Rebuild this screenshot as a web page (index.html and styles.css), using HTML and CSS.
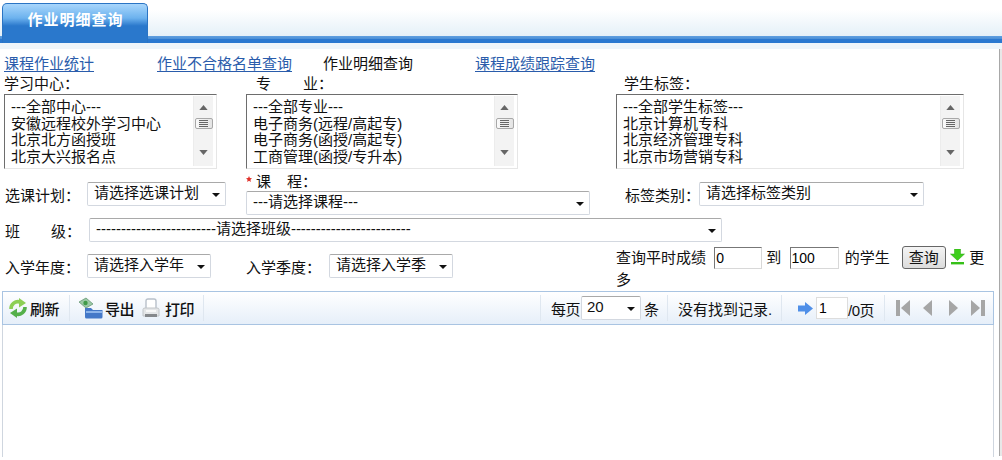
FILE: index.html
```html
<!DOCTYPE html>
<html lang="zh-CN">
<head>
<meta charset="utf-8">
<title>作业明细查询</title>
<link rel="stylesheet" href="styles.css">
</head>
<body>
<div class="page">
  <header class="tabbar">
    <div class="tab">作业明细查询</div>
  </header>
  <div class="band"></div>
  <main class="main">
  <nav class="links">
    <a class="link link-a" href="#">课程作业统计</a>
    <a class="link link-b" href="#">作业不合格名单查询</a>
    <span class="link-cur">作业明细查询</span>
    <a class="link link-c" href="#">课程成绩跟踪查询</a>
  </nav>
  <form class="form">
    <div class="cell">
      <div class="lbl">学习中心：</div>
      <div class="list list-1">
        <div class="items"><div>---全部中心---</div><div>安徽远程校外学习中心</div><div>北京北方函授班</div><div>北京大兴报名点</div></div>
        <div class="sb"><svg class="sb-up" width="9" height="5" viewBox="0 0 10 6"><path d="M5 0L10 6H0z" fill="#666"/></svg><div class="thumb"><i></i></div><svg class="sb-dn" width="9" height="5" viewBox="0 0 10 6"><path d="M0 0H10L5 6z" fill="#666"/></svg></div>
      </div>
    </div>
    <div class="cell">
      <div class="lbl lbl-ind">专<span class="sp"></span>业：</div>
      <div class="list list-2">
        <div class="items"><div>---全部专业---</div><div>电子商务(远程/高起专)</div><div>电子商务(函授/高起专)</div><div>工商管理(函授/专升本)</div></div>
        <div class="sb"><svg class="sb-up" width="9" height="5" viewBox="0 0 10 6"><path d="M5 0L10 6H0z" fill="#666"/></svg><div class="thumb"><i></i></div><svg class="sb-dn" width="9" height="5" viewBox="0 0 10 6"><path d="M0 0H10L5 6z" fill="#666"/></svg></div>
      </div>
    </div>
    <div class="cell">
      <div class="lbl lbl-ind3">学生标签：</div>
      <div class="list list-3">
        <div class="items"><div>---全部学生标签---</div><div>北京计算机专科</div><div>北京经济管理专科</div><div>北京市场营销专科</div></div>
        <div class="sb"><svg class="sb-up" width="9" height="5" viewBox="0 0 10 6"><path d="M5 0L10 6H0z" fill="#666"/></svg><div class="thumb"><i></i></div><svg class="sb-dn" width="9" height="5" viewBox="0 0 10 6"><path d="M0 0H10L5 6z" fill="#666"/></svg></div>
      </div>
    </div>

    <div class="cell row-inline">
      <span class="lbl-w">选课计划：</span>
      <label class="sel sel-plan"><select><option>请选择选课计划</option></select></label>
    </div>
    <div class="cell">
      <div class="lbl lbl-course"><svg class="star" width="6" height="6" viewBox="0 0 10 10"><path d="M5 0L6.500 3.400 10 3.800 7.400 6.200 8.100 10 5 8 1.900 10 2.600 6.200 0 3.800 3.500 3.400z" fill="#e0312a"/></svg>课<span class="sp2"></span>程：</div>
      <label class="sel sel-course"><select><option>---请选择课程---</option></select></label>
    </div>
    <div class="cell row-inline row-tag">
      <span class="lbl-w2">标签类别：</span>
      <label class="sel sel-tag"><select><option>请选择标签类别</option></select></label>
    </div>

    <div class="cell-full row-inline">
      <span class="lbl-class">班<span class="sp3"></span>级：</span>
      <label class="sel sel-class"><select><option>------------------------请选择班级------------------------</option></select></label>
    </div>

    <div class="cell row-inline row-year">
      <span class="lbl-w">入学年度：</span>
      <label class="sel sel-year"><select><option>请选择入学年</option></select></label>
    </div>
    <div class="cell row-inline row-year">
      <span class="lbl-w lbl-season">入学季度：</span>
      <label class="sel sel-year"><select><option>请选择入学季</option></select></label>
    </div>
    <div class="cell score">
      查询平时成绩 <input class="num num-a" value="0"> 到 <input class="num num-b" value="100"> 的学生 <button class="btn" type="button">查询</button>
      <svg class="more-ic" width="15" height="16" viewBox="0 0 15 16"><path d="M4.500 0H10.500V5H14.500L7.500 11.500.5 5H4.500z" fill="#3ecf1c" stroke="#2aa012" stroke-width=".5"/><rect x="1" y="13" width="13" height="2.400" fill="#36c018"/></svg>
      更多
    </div>
  </form>

  <section class="grid">
    <div class="toolbar">
      <div class="tgroup tg-1">
        <svg class="ic" width="20" height="20" viewBox="0 0 20 20"><g fill="none"><path d="M3 11A7 7 0 0 1 12 4" stroke="#8ccf55" stroke-width="3.600"/><path d="M11 0L18 5 11 9.500z" fill="#8ccf55"/><g transform="rotate(180 10 10)"><path d="M3 11A7 7 0 0 1 12 4" stroke="#55b04a" stroke-width="3.600"/><path d="M11 0L18 5 11 9.500z" fill="#55b04a"/></g></g></svg>
        <span>刷新</span>
      </div>
      <div class="tgroup tg-2">
        <svg class="ic" width="26" height="22" viewBox="0 0 26 22"><path d="M1 5L8 1l7 6-7 4z" fill="#9cc9a6" stroke="#5c8f6a" stroke-width=".7"/><circle cx="7.500" cy="6" r="2.200" fill="#3f9a48"/><path d="M7 11h6l2 2h9.500v7a1.500 1.500 0 0 1-1.500 1.500H8.500A1.500 1.500 0 0 1 7 20z" fill="#4478c8"/><path d="M8 14h16v2H8z" fill="#8db4ea"/></svg>
        <span>导出</span>
        <svg class="ic ic-print" width="18" height="21" viewBox="0 0 18 21"><path d="M4 10V3Q4 1 6 1h6q2 0 2 2v7" fill="#fff" stroke="#b8c0ca" stroke-width="1.400"/><path d="M1 11.500Q1 10 3 10h12q2 0 2 1.500V18H1z" fill="#e4e6e8" stroke="#c0c4c8"/><rect x="3" y="16" width="12" height="3" fill="#85888c"/><rect x="4" y="12" width="10" height="2" fill="#f8f8f8"/></svg>
        <span>打印</span>
      </div>
      <div class="tgroup tg-3">
        <span>每页</span>
        <label class="sel sel-page"><select><option>20</option></select></label>
        <span>条</span>
      </div>
      <div class="tgroup tg-4"><span>没有找到记录.</span></div>
      <div class="tgroup tg-5">
        <svg width="15" height="13" viewBox="0 0 15 13"><path d="M0 3.500H7V0L15 6.500 7 13V9.500H0z" fill="#4f8fe8"/></svg>
        <input class="pageno" value="1">
        <span class="pg">/0页</span>
      </div>
      <div class="tgroup tg-6">
        <svg width="14" height="16" viewBox="0 0 14 16"><rect x="0" y="0" width="4" height="16" fill="#a6a6a6"/><path d="M14 0V16L5 8z" fill="#a6a6a6"/></svg>
        <svg width="9" height="16" viewBox="0 0 9 16"><path d="M9 0V16L0 8z" fill="#a6a6a6"/></svg>
        <svg class="pg-next" width="9" height="16" viewBox="0 0 9 16"><path d="M0 0V16L9 8z" fill="#a6a6a6"/></svg>
        <svg width="14" height="16" viewBox="0 0 14 16"><path d="M0 0V16L9 8z" fill="#a6a6a6"/><rect x="10" y="0" width="4" height="16" fill="#a6a6a6"/></svg>
      </div>
    </div>
    <div class="grid-body"></div>
  </section>
  </main>
</div>
</body>
</html>
```
FILE: styles.css
```css
* { box-sizing: border-box; }
html, body { margin: 0; padding: 0; background: #fff; }
body {
  font-family: "Liberation Sans", "Noto Sans CJK SC", sans-serif;
  font-size: 15px;
  color: #111;
  overflow: hidden;
}
.page { width: 1002px; height: 460px; overflow: hidden; }
.tabbar {
  height: 43px;
  padding: 3px 0 0 2px;
  background: linear-gradient(#fff 0, #fff 10px, #e4f0f8 36px, #5f9fe0 36px, #4a8fd6 39px, #2a78d0 39px);
}
.tab {
  width: 146px;
  height: 40px;
  border: 1px solid #2a74c4;
  border-bottom: 0;
  border-radius: 5px 5px 0 0;
  background: linear-gradient(#a8d6fc 0, #6cb2ee 36%, #2a78cc 56%, #2a78cc 100%);
  color: #fff;
  font-weight: 700;
  text-align: center;
  line-height: 32px;
  letter-spacing: 1px;
  padding-left: 1px;
}
.band { height: 6px; background: #eef5fa; }
.main {
  height: 407px;
  border-right: 2px solid #e8e8e8;
  box-shadow: inset -1px 0 0 #a8a8a8;
}
.links { display: flex; height: 27px; padding-left: 4px; align-items: center; }
.link { color: #2a5cab; text-decoration: underline; text-underline-offset: 2px; }
.link-a { width: 153px; }
.link-b { width: 166px; }
.link-cur { width: 152px; }
.form {
  display: grid;
  grid-template-columns: 242px 370px 372px;
  grid-template-rows: 103px 36px 36px 43px;
  padding-left: 4px;
  margin-top: -3px;
}
.cell, .cell-full { min-width: 0; white-space: nowrap; }
.cell-full { grid-column: 1 / -1; }
.row-inline { display: flex; align-items: center; }
.row-year { height: 36px; }
.lbl { height: 21px; line-height: 21px; }
.lbl-ind { padding-left: 10px; }
.lbl-ind3 { padding-left: 8px; }
.sp { display: inline-block; width: 32px; }
.sp2 { display: inline-block; width: 16px; }
.sp3 { display: inline-block; width: 31px; }
.list {
  display: flex;
  height: 75px;
  border: 1px solid #e6e6e6;
  border-top-color: #6d6d6d;
  border-left-color: #6d6d6d;
  overflow: hidden;
}
.list-1 { width: 213px; }
.list-2 { width: 272px; }
.list-3 { width: 348px; }
.items { flex: 1; padding: 4px 0 0 6px; line-height: 16.600px; white-space: nowrap; overflow: hidden; }
.sb {
  width: 20px;
  margin: 1px 3px 2px 0;
  background: #f3f3f3;
  border-left: 1px solid #ececec;
  display: flex;
  flex-direction: column;
  align-items: center;
}
.sb-up { margin-top: 9px; }
.sb-dn { margin-top: 21px; }
.thumb {
  width: 18px;
  height: 11px;
  margin-top: 8px;
  border: 1px solid #a8a8a8;
  border-radius: 2px;
  background: linear-gradient(90deg, #fafafa, #e4e4e4);
  display: flex;
  align-items: center;
  justify-content: center;
}
.thumb i { display: block; width: 9px; height: 7px; background: repeating-linear-gradient(#666 0 1px, #eee 1px 2px); }
.sel {
  position: relative;
  display: block;
  height: 24px;
  border: 1px solid #d3d8e0;
  border-top-color: #a9a9a9;
  border-radius: 2px;
  background: #fff;
  flex: none;
}
.sel::after {
  content: "";
  position: absolute;
  right: 5px;
  top: 10px;
  border: 4px solid transparent;
  border-top: 4px solid #111;
  border-bottom: 0;
}
.sel select {
  appearance: none;
  display: block;
  width: 100%;
  height: 100%;
  border: 0;
  padding: 0 14px 3px 6px;
  background: transparent;
  font: inherit;
  color: inherit;
  outline: 0;
}
.lbl-w { width: 83px; padding-left: 1px; flex: none; }
.sel-plan { width: 139px; }
.sel-tag { width: 225px; }
.sel-course { width: 344px; }
.sel-year { width: 124px; }
.sel-class { width: 633px; }
.lbl-course { position: relative; height: 19px; line-height: 20px; padding-left: 10px; margin-top: -4px; }
.star { position: absolute; left: 0; top: 4px; }
.row-tag { padding-left: 9px; }
.lbl-w2 { width: 74px; flex: none; }
.lbl-class { width: 85px; padding-left: 1px; flex: none; }
.lbl-w.lbl-season { width: 83px; padding-left: 0; }
.score { line-height: 22px; margin-top: -1px; width: 371px; white-space: normal; }
.num {
  width: 49px;
  height: 22px;
  border: 1px solid #d8d8d8;
  border-top-color: #777;
  border-left-color: #777;
  padding: 0 1px;
  font: 14px "Liberation Sans", sans-serif;
  vertical-align: top;
}
.num-a { margin-left: 4px; width: 48px; }
.num-b { margin: 0 2px 0 4px; }
.btn {
  width: 44px;
  height: 23px;
  margin: -1px 0 0 8px;
  padding: 0 0 3px;
  border: 1px solid #666;
  border-radius: 3px;
  background: linear-gradient(#f4f4f4, #dcdcdc);
  font: inherit;
  color: #111;
  vertical-align: top;
}
.more-ic { vertical-align: -2px; }
.grid { margin: 0 0 0 2px; width: 992px; }
.toolbar {
  display: flex;
  align-items: center;
  height: 34px;
  border: 1px solid #a9c4e2;
  background: linear-gradient(#fff, #e6eff9);
}
.tgroup { display: flex; align-items: center; height: 26px; border-right: 1px solid #dfe7f0; flex: none; }
.tg-1 { width: 67px; padding-left: 5px; gap: 2px; font-weight: 500; letter-spacing: -.5px; }
.tg-2 { width: 134px; padding-left: 8px; gap: 1px; font-weight: 500; letter-spacing: -.5px; }
.ic-print { margin: 0 4px 0 7px; }
.tg-3 { margin-left: 336px; width: 128px; padding-left: 10px; border-left: 1px solid #dfe7f0; letter-spacing: -.5px; }
.sel-page { width: 60px; margin: 0 3px 0 1px; letter-spacing: 0; }
.sel-page select { padding-left: 5px; }
.tg-4 { width: 114px; padding-left: 10px; }
.tg-5 { width: 103px; padding-left: 16px; }
.pageno { width: 32px; height: 22px; margin-left: 3px; border: 1px solid #ddd; padding: 0 2px; font: 14px "Liberation Sans", sans-serif; }
.pg { padding-top: 3px; letter-spacing: -.5px; }
.tg-6 { border: 0; gap: 13px; padding-left: 11px; }
.pg-next { margin-left: 4px; }
.grid-body { height: 132px; border-left: 1px solid #cfd6df; border-right: 1px solid #cfd6df; }
```
